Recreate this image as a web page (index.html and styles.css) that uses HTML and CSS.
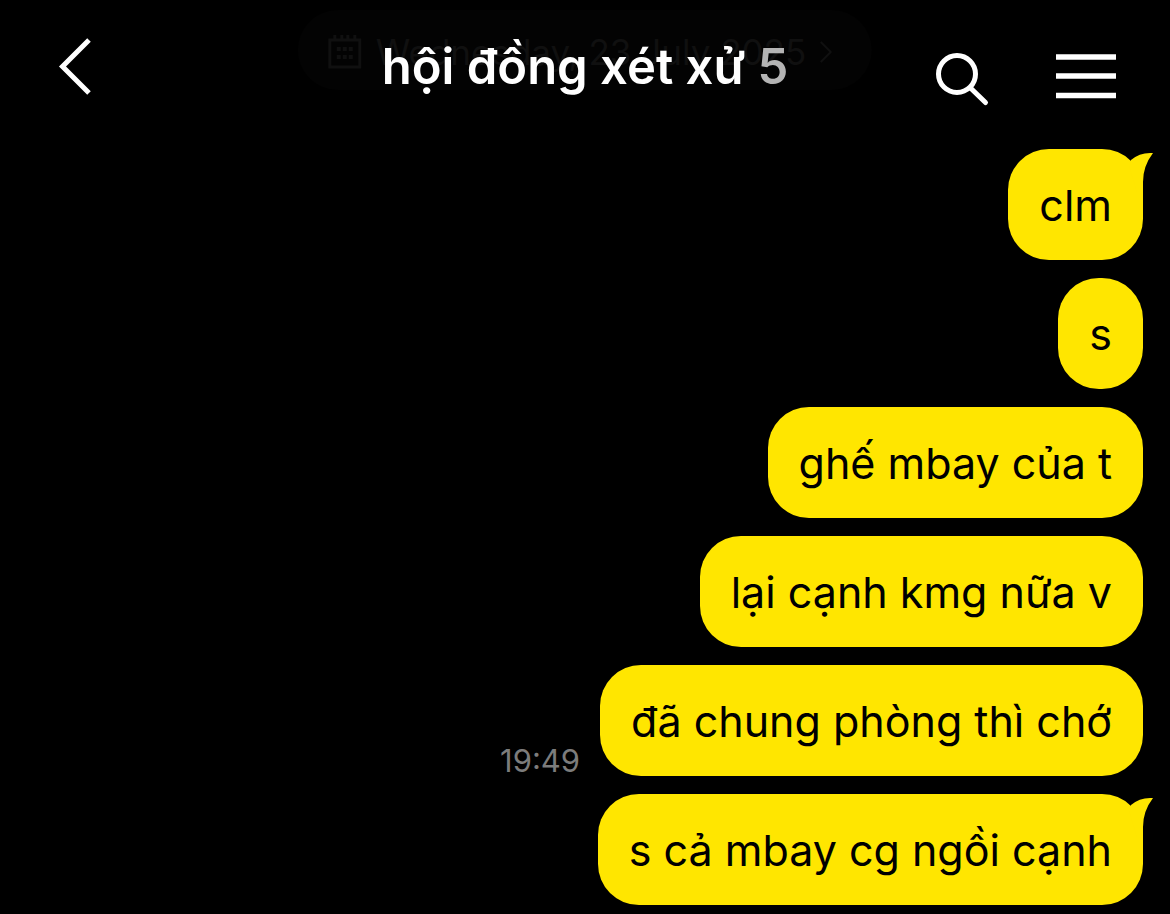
FILE: index.html
```
<!DOCTYPE html>
<html lang="vi">
<head>
  <meta charset="UTF-8" />
  <meta name="viewport" content="width=device-width, initial-scale=1" />
  <title>hội đồng xét xử</title>
  <link rel="stylesheet" href="styles.css">
</head>
<body>

  <header class="chat-header">
    <button class="date-pill" type="button">
      <svg class="date-icon" viewBox="0 0 34 34" aria-hidden="true">
        <path d="M2 5H32V32H2ZM7 0V6M14 0V6M20 0V6M27 0V6" fill="none" stroke="currentColor" stroke-width="3"/>
        <path d="M9 14h4M15 14h4M21 14h4M9 22h4M15 22h4M21 22h4" fill="none" stroke="currentColor" stroke-width="4"/>
      </svg>
      <span>Wednesday, 23 July 2025</span>
      <svg class="date-arrow" viewBox="0 0 12 22" aria-hidden="true">
        <path d="M1 1L11 11L1 21" fill="none" stroke="currentColor" stroke-width="2"/>
      </svg>
    </button>

    <button class="icon-btn back-btn" type="button" aria-label="Back">
      <svg viewBox="0 0 60 60">
        <path d="M35 3L8.500 29.500L35 56" fill="none" stroke="#fff" stroke-width="5"/>
      </svg>
    </button>

    <h1 class="chat-title">hội đồng xét xử <span class="member-count">5</span></h1>

    <div class="actions">
      <button class="icon-btn" type="button" aria-label="Search">
        <svg viewBox="0 0 60 60">
          <circle cx="21" cy="27" r="18.500" fill="none" stroke="#fff" stroke-width="5"/>
          <path d="M34.500 41L49.500 55.500" fill="none" stroke="#fff" stroke-width="5" stroke-linecap="round"/>
        </svg>
      </button>
      <button class="icon-btn" type="button" aria-label="Menu">
        <svg viewBox="0 0 60 60">
          <path d="M0 10H60M0 29H60M0 48.500H60" fill="none" stroke="#fff" stroke-width="5.500"/>
        </svg>
      </button>
    </div>
  </header>

  <main class="messages">
    <div class="message">
      <p class="bubble">clm
        <svg class="tail" viewBox="0 0 24 40" aria-hidden="true"><path d="M0 14L2 8Q11 0 24 1Q14 14 14 30V40H8Z"/></svg>
      </p>
    </div>
    <div class="message">
      <p class="bubble">s</p>
    </div>
    <div class="message">
      <p class="bubble">ghế mbay của t</p>
    </div>
    <div class="message">
      <p class="bubble">lại cạnh kmg nữa v</p>
    </div>
    <div class="message">
      <time class="time">19:49</time>
      <p class="bubble">đã chung phòng thì chớ</p>
    </div>
    <div class="message">
      <p class="bubble">s cả mbay cg ngồi cạnh
        <svg class="tail" viewBox="0 0 24 40" aria-hidden="true"><path d="M0 14L2 8Q11 0 24 1Q14 14 14 30V40H8Z"/></svg>
      </p>
    </div>
  </main>

</body>
</html>
```
FILE: styles.css
```
* {
  box-sizing: border-box;
}

body {
  margin: 0;
  font-family: Inter, "Noto Sans", sans-serif;
  background: #000;
  color: #fff;
}

button {
  padding: 0;
  border: none;
  background: none;
  font-family: inherit;
  cursor: pointer;
}

svg {
  display: block;
}

/* header */
.chat-header {
  position: relative;
  display: grid;
  grid-template-columns: 1fr auto 1fr;
  align-items: center;
  min-height: 134px;
  padding: 0 54px;
}

.icon-btn,
.icon-btn svg {
  width: 60px;
  height: 60px;
}

.chat-title {
  position: relative;
  margin: 0;
  font-size: 49px;
  line-height: 60px;
  font-weight: 600;
  white-space: nowrap;
}

.member-count {
  color: #b4b4b4;
}

.actions {
  display: flex;
  justify-content: flex-end;
  gap: 60px;
  margin-top: 20px;
}

/* faded date behind the title */
.date-pill {
  position: absolute;
  top: 10px;
  left: 50%;
  transform: translateX(-50%);
  display: flex;
  align-items: center;
  gap: 14px;
  height: 80px;
  padding: 4px 40px 0 30px;
  border-radius: 40px;
  background: #030303;
  color: #101010;
  font-size: 35px;
  white-space: nowrap;
}

.date-icon {
  width: 34px;
  height: 34px;
}

.date-arrow {
  width: 12px;
  height: 22px;
}

/* messages */
.messages {
  display: flex;
  flex-direction: column;
  gap: 18px;
  padding: 15px 27px 9px;
}

.message {
  display: flex;
  justify-content: flex-end;
  align-items: flex-end;
  gap: 20px;
}

.bubble {
  position: relative;
  margin: 0;
  padding: 28px 31px 27px;
  border-radius: 41px;
  background: #ffe600;
  color: #000;
  font-size: 43px;
  line-height: 56px;
}

.tail {
  position: absolute;
  top: 3px;
  right: -10px;
  width: 24px;
  height: 40px;
  fill: #ffe600;
}

.time {
  color: #7c7c7c;
  font-size: 31px;
  line-height: 30px;
}
```
